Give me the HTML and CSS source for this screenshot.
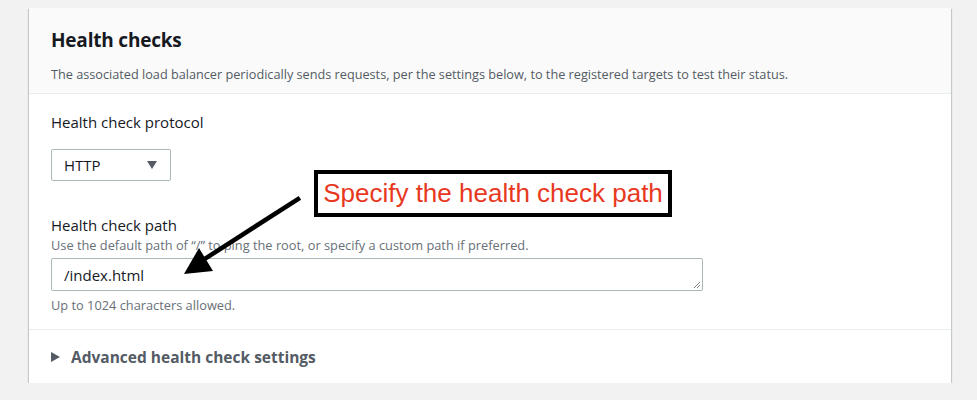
FILE: index.html
```html
<!DOCTYPE html>
<html>
<head>
<meta charset="utf-8">
<link rel="stylesheet" href="styles.css">
</head>
<body>
<div class="card">
  <div class="card-header">
    <h2 class="title">Health checks</h2>
    <p class="subtitle">The associated load balancer periodically sends requests, per the settings below, to the registered targets to test their status.</p>
  </div>
  <div class="card-body">
    <div class="field field-protocol">
      <div class="label">Health check protocol</div>
      <div class="select">
        <span class="select-value">HTTP</span>
        <span class="caret"></span>
      </div>
    </div>
    <div class="field field-path">
      <div class="label">Health check path</div>
      <div class="desc">Use the default path of “/” to ping the root, or specify a custom path if preferred.</div>
      <div class="textarea">
        <span class="textarea-value">/index.html</span>
        <svg class="grip" width="9" height="9" viewBox="0 0 9 9"><path d="M8 2 L2 8 M8 5 L5 8" stroke="#888" stroke-width="1" fill="none"/></svg>
      </div>
      <div class="hint">Up to 1024 characters allowed.</div>
    </div>
  </div>
  <div class="card-footer">
    <span class="expand-caret"></span>
    <span class="expand-label">Advanced health check settings</span>
  </div>
  <div class="callout">Specify the health check path</div>
  <svg class="arrow" width="977" height="400" viewBox="0 0 977 400">
    <line x1="298" y1="199" x2="200" y2="262" stroke="#000" stroke-width="4.5" stroke-linecap="square"/>
    <polygon points="184,274 199,248 213,271" fill="#000"/>
  </svg>
</div>
</body>
</html>
```

FILE: styles.css
```css
html, body {
  margin: 0;
  padding: 0;
  background: #f2f2f2;
}
body {
  padding: 8px 26px 0 29px;
  font-family: "Open Sans", "Liberation Sans", Arial, sans-serif;
  color: #16191f;
}
.card {
  background: #ffffff;
  box-shadow: 0 1px 1px 0 rgba(0,28,36,0.3), 1px 1px 1px 0 rgba(0,28,36,0.15), -1px 1px 1px 0 rgba(0,28,36,0.15);
  height: 375px;
  display: flex;
  flex-direction: column;
}
.card-header {
  background: #fafafa;
  border-bottom: 1px solid #eaeded;
  height: 85px;
  box-sizing: content-box;
  padding: 0 22px;
  display: flex;
  flex-direction: column;
}
.title {
  margin: 19px 0 0 0;
  font-size: 19px;
  line-height: 26px;
  font-weight: 700;
  color: #16191f;
  letter-spacing: -0.2px;
}
.subtitle {
  margin: 12px 0 0 0;
  font-size: 12.7px;
  line-height: 18px;
  color: #545b64;
}
.card-body {
  padding: 0 22px;
  border-bottom: 1px solid #eaeded;
  height: 235px;
  display: flex;
  flex-direction: column;
}
.label {
  font-size: 15px;
  line-height: 20px;
  color: #16191f;
}
.field-protocol {
  margin-top: 18px;
}
.select {
  margin-top: 17px;
  height: 30px;
  border: 1px solid #aab7b8;
  border-radius: 2px;
  display: flex;
  align-items: center;
  justify-content: space-between;
  padding: 0 13px 0 12px;
  box-sizing: content-box;
  width: 93px;
}
.select-value {
  font-size: 15px;
  color: #16191f;
}
.caret {
  width: 0;
  height: 0;
  border-left: 5.5px solid transparent;
  border-right: 5.5px solid transparent;
  border-top: 8px solid #545b64;
}
.field-path {
  margin-top: 34px;
}
.desc {
  margin-top: 1px;
  font-size: 12.8px;
  line-height: 18px;
  color: #687078;
}
.textarea {
  margin-top: 4px;
  height: 31px;
  border: 1px solid #aab7b8;
  border-radius: 2px;
  position: relative;
  display: flex;
  align-items: center;
  padding-left: 12px;
  box-sizing: content-box;
  width: 638px;
}
.textarea-value {
  font-size: 15px;
  color: #16191f;
}
.grip {
  position: absolute;
  right: 1px;
  bottom: 1px;
}
.hint {
  margin-top: 5px;
  font-size: 12.8px;
  line-height: 18px;
  color: #687078;
}
.card-footer {
  flex: 1;
  display: flex;
  align-items: center;
  padding: 0 22px 0 22px;
  gap: 11px;
}
.expand-caret {
  width: 0;
  height: 0;
  border-top: 5px solid transparent;
  border-bottom: 5px solid transparent;
  border-left: 9px solid #545b64;
}
.expand-label {
  font-size: 15.5px;
  font-weight: 700;
  color: #545b64;
}
.callout {
  position: absolute;
  left: 314px;
  top: 170px;
  width: 350px;
  height: 39px;
  border: 4px solid #000;
  background: #fff;
  color: #e8391f;
  font-family: "Liberation Sans", Arial, sans-serif;
  font-size: 26px;
  line-height: 39px;
  text-align: center;
}
.arrow {
  position: absolute;
  left: 0;
  top: 0;
  pointer-events: none;
}
```
